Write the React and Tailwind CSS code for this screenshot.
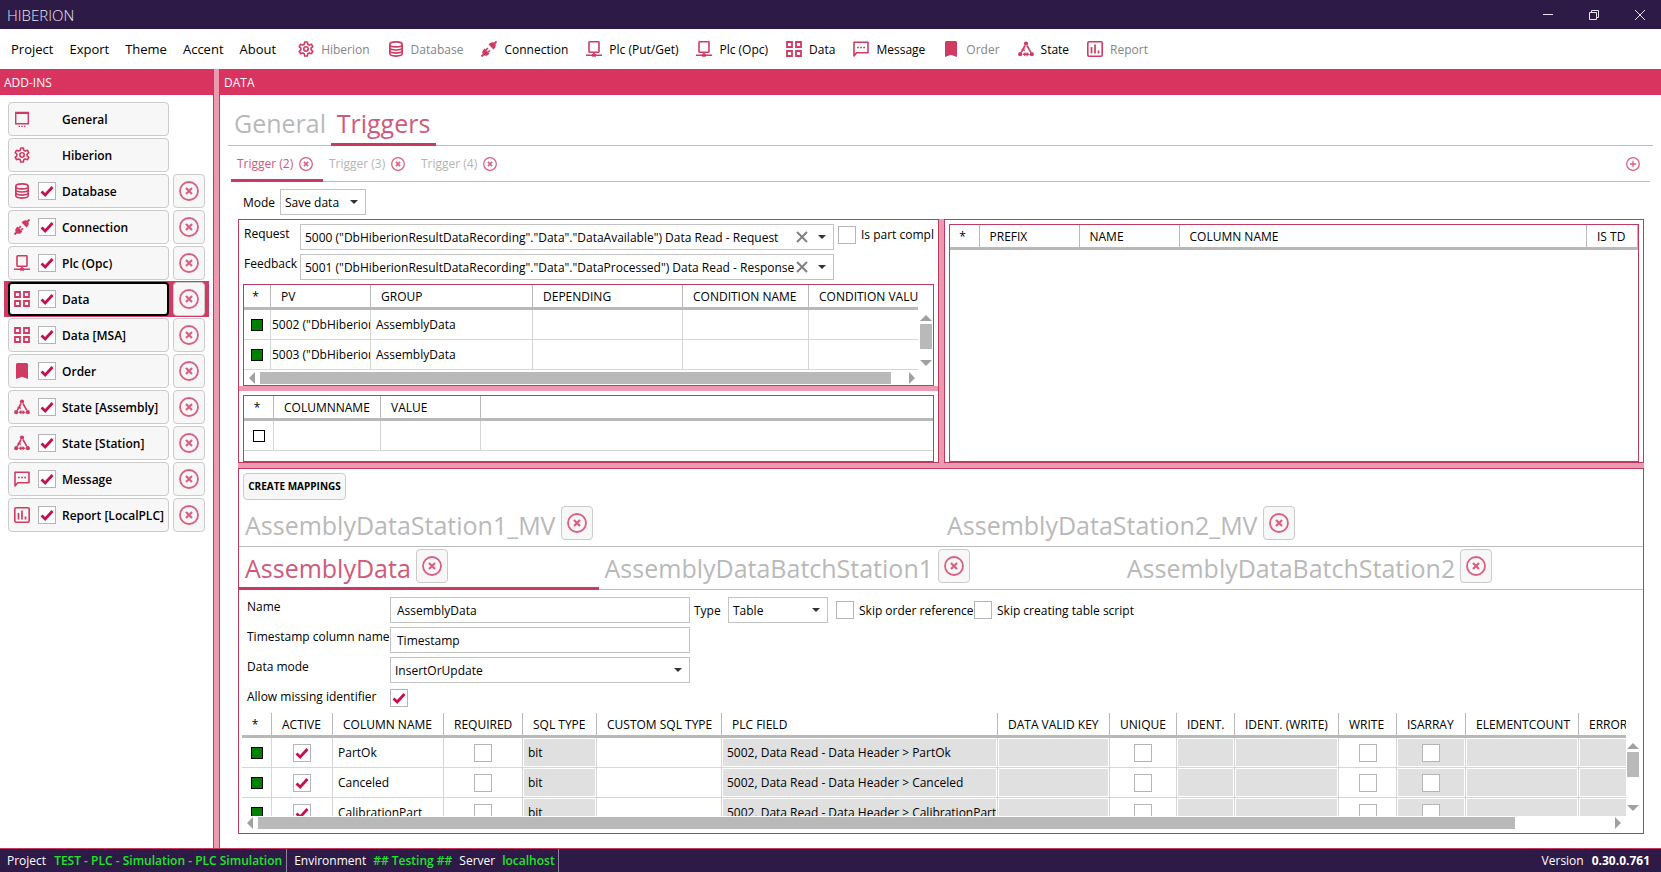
import { useState } from 'react';

/* ---------- Icons ---------- */

const Svg = ({ children, className = 'size-4' }) => (
    <svg viewBox="0 0 16 16" className={`${className} shrink-0 text-[#d13a63]`} fill="none" stroke="currentColor" strokeWidth="1.6" aria-hidden="true">
        {children}
    </svg>
);

const GeneralIcon = () => (
    <Svg>
        <path d="M1.700 1.500h12.600v11.300H1.700z" strokeWidth="1.400" />
        <path d="M1 2h14" strokeWidth="2" />
        <path d="M4.600 15.400H6M7.300 15.400h1.400M10 15.400h1.400" strokeWidth="1.200" />
    </Svg>
);

const GearIcon = () => (
    <Svg>
        <path strokeLinejoin="round" d="M6.700 1h2.600l.5 2.300 1.400.8 2.300-.8 1.300 2.300-1.700 1.600v1.600l1.700 1.600-1.300 2.300-2.300-.8-1.400.8L9.300 15H6.700l-.5-2.300-1.400-.8-2.300.8-1.300-2.300 1.700-1.600V7.200L1.200 5.600l1.300-2.300 2.300.8 1.400-.8z" />
        <circle cx="8" cy="8" r="2.200" />
    </Svg>
);

const DatabaseIcon = () => (
    <Svg>
        <ellipse cx="8" cy="3.400" rx="6.200" ry="2.500" />
        <path d="M1.800 3.400v9.200c0 1.400 2.800 2.500 6.200 2.500s6.200-1.100 6.200-2.500V3.400" />
        <path d="M1.800 6.500C1.800 7.900 4.600 9 8 9s6.200-1.100 6.200-2.500M1.800 9.600c0 1.400 2.800 2.500 6.200 2.500s6.200-1.100 6.200-2.500" />
    </Svg>
);

const PlugIcon = () => (
    <Svg>
        <path d="M.5 15.500l2.600-2.600M12.900 3.100L15.500.5" strokeWidth="2" />
        <path fill="currentColor" stroke="none" d="M3.600 7.600l4.800 4.800-1.500 1.500c-1.400 1.200-3.400 1.100-4.700-.1-1.200-1.300-1.300-3.300-.1-4.700z" />
        <path fill="currentColor" stroke="none" d="M7.600 3.600l4.800 4.800 1.500-1.500c1.200-1.400 1.100-3.400-.1-4.700-1.300-1.200-3.300-1.300-4.700-.1z" />
        <path d="M4.900 9.100l2-2M7 11.200l2-2" strokeWidth="1.500" />
    </Svg>
);

const PlcIcon = () => (
    <Svg>
        <rect x="3" y=".8" width="10" height="10.400" rx=".6" />
        <path d="M8 11v3M0 14.300h16" />
        <path d="M6 12.900h4v2.800H6z" fill="currentColor" stroke="none" />
    </Svg>
);

const DataIcon = () => (
    <Svg>
        <path strokeWidth="1.800" d="M1 1h5v5H1zM10 1h5v5h-5zM1 10h5v5H1zM10 10h5v5h-5z" />
    </Svg>
);

const MessageIcon = () => (
    <Svg>
        <path d="M1 15V1.200h14v10.600H3.600z" strokeLinejoin="round" />
        <path d="M4 6.500h1.800M7.100 6.500h1.800M10.200 6.500H12" strokeWidth="1.600" />
    </Svg>
);

const BookmarkIcon = () => (
    <Svg>
        <path fill="currentColor" stroke="none" d="M3.500 0h9A1.500 1.500 0 0 1 14 1.500V16l-6-2.300L2 16V1.500A1.500 1.500 0 0 1 3.500 0z" />
    </Svg>
);

const StateIcon = () => (
    <Svg>
        <g fill="currentColor" stroke="none">
            <circle cx="8" cy="2.500" r="2.100" />
            <circle cx="2.200" cy="13.200" r="2.100" />
            <circle cx="13.800" cy="13.200" r="2.100" />
            <path d="M4.600 13.200l2.800-2.200v4.400zM11.400 13.200L8.600 11v4.400zM3 8.500l3.600-1.200.2 3z" />
        </g>
        <path d="M7 4.500l-3.800 6.800M9 4.500l3.800 6.800M6 13.200h4" />
    </Svg>
);

const ReportIcon = () => (
    <Svg>
        <rect x=".8" y=".8" width="14.400" height="14.400" rx="1.200" />
        <path d="M4.500 6v6.500M8 3.500v9M11.500 9.500v3" strokeWidth="1.700" />
    </Svg>
);

const CircleIcon = ({ plus, className }) => (
    <svg viewBox="0 0 20 20" className={`${className} shrink-0 text-[#da5f82]`} fill="none" stroke="currentColor" strokeWidth="1.8" aria-hidden="true">
        <circle cx="10" cy="10" r="9" />
        {plus ? <path d="M10 5.500v9M5.500 10h9" /> : <path d="M7 7l6 6M13 7l-6 6" strokeWidth="2.200" />}
    </svg>
);

/* ---------- Controls ---------- */

function CheckBox({ id, checked = false, label }) {
    const [on, setOn] = useState(checked);
    return (
        <span className="inline-grid size-[18px] shrink-0 align-middle">
            <input
                id={id}
                type="checkbox"
                aria-label={label}
                checked={on}
                onChange={() => setOn(!on)}
                className="peer col-start-1 row-start-1 size-[18px] appearance-none border border-[#b5b5b5] bg-white"
            />
            <svg viewBox="0 0 18 18" className="pointer-events-none invisible col-start-1 row-start-1 size-[18px] peer-checked:visible" fill="none" stroke="#c5114b" strokeWidth="2.800">
                <path d="M3.500 9.500l3.700 3.500 7.300-8" />
            </svg>
        </span>
    );
}

function Select({ id, value, label, className, clearable }) {
    return (
        <div className={`relative h-[26px] ${className}`}>
            <select id={id} aria-label={label} className="block size-full appearance-none truncate border border-[#c3c3c3] bg-white px-1 pt-[2px] text-xs">
                <option>{value}</option>
            </select>
            {clearable && (
                <button aria-label="Clear" className="absolute top-[7px] right-[26px] size-3">
                    <svg viewBox="0 0 12 12" className="size-3" stroke="#808080" strokeWidth="2">
                        <path d="M1 1l10 10M11 1L1 11" />
                    </svg>
                </button>
            )}
            <svg viewBox="0 0 8 4" className="pointer-events-none absolute top-[11px] right-2 h-1 w-2" fill="#333">
                <path d="M0 0h8L4 4z" />
            </svg>
        </div>
    );
}

const DeleteButton = () => (
    <button aria-label="Remove" className="flex h-[34px] w-8 shrink-0 items-center justify-center rounded border border-[#cbcbcb] bg-[#f7f7f7] hover:bg-white">
        <CircleIcon className="size-5" />
    </button>
);

const Square = ({ empty }) => (
    <span className={`inline-block size-3 border border-black align-middle ${empty ? 'bg-white' : 'bg-[#008000]'}`} />
);

const Arrow = ({ dir }) => {
    const d = {
        up: 'M0 9l6-6 6 6z',
        down: 'M0 3h12L6 9z',
        left: 'M9 0v12L3 6z',
        right: 'M3 0v12l6-6z',
    }[dir];
    return (
        <svg viewBox="0 0 12 12" className="size-3 shrink-0" fill="#a0a0a0" aria-hidden="true">
            <path d={d} />
        </svg>
    );
};

const VScroll = ({ className }) => (
    <div className={`flex w-3 shrink-0 flex-col ${className}`}>
        <Arrow dir="up" />
        <div className="h-[25px] bg-[#b9b9b9]" />
        <div className="flex-1" />
        <Arrow dir="down" />
    </div>
);

const HScroll = ({ className, thumb }) => (
    <div className={`flex h-3 shrink-0 ${className}`}>
        <Arrow dir="left" />
        <div className="flex-1 px-[2px]">
            <div className={`h-3 bg-[#b9b9b9] ${thumb}`} />
        </div>
        <Arrow dir="right" />
    </div>
);

const Th = ({ children, first, last }) => (
    <th className={`h-[25px] overflow-hidden border-b-[3px] border-b-[#b9b9b9] border-r-[#b9b9b9] pt-[2px] text-xs font-medium whitespace-nowrap ${last ? '' : 'border-r'} ${first ? 'pr-[3px] text-center' : 'pl-[10px] text-left'}`}>
        {children}
    </th>
);

const Td = ({ children, center, locked, tight, last }) => (
    <td className={`h-[30px] overflow-hidden border-b border-[#d6d6d6] p-0 whitespace-nowrap ${last ? '' : 'border-r'}`}>
        <div className={`flex h-[29px] items-center overflow-hidden ${center ? 'justify-center' : tight ? 'pl-px' : locked ? 'pl-1' : 'pl-[5px]'} ${locked ? 'border border-white bg-[#e0e0e0]' : ''}`}>
            {children}
        </div>
    </td>
);

/* ---------- Data ---------- */

const menu = ['Project', 'Export', 'Theme', 'Accent', 'About'];

const toolbar = [
    { icon: GearIcon, text: 'Hiberion', off: true },
    { icon: DatabaseIcon, text: 'Database', off: true },
    { icon: PlugIcon, text: 'Connection' },
    { icon: PlcIcon, text: 'Plc (Put/Get)' },
    { icon: PlcIcon, text: 'Plc (Opc)' },
    { icon: DataIcon, text: 'Data' },
    { icon: MessageIcon, text: 'Message' },
    { icon: BookmarkIcon, text: 'Order', off: true },
    { icon: StateIcon, text: 'State' },
    { icon: ReportIcon, text: 'Report', off: true },
];

const addIns = [
    { icon: GeneralIcon, text: 'General', fixed: true },
    { icon: GearIcon, text: 'Hiberion', fixed: true },
    { icon: DatabaseIcon, text: 'Database' },
    { icon: PlugIcon, text: 'Connection' },
    { icon: PlcIcon, text: 'Plc (Opc)' },
    { icon: DataIcon, text: 'Data', selected: true },
    { icon: DataIcon, text: 'Data [MSA]' },
    { icon: BookmarkIcon, text: 'Order' },
    { icon: StateIcon, text: 'State [Assembly]' },
    { icon: StateIcon, text: 'State [Station]' },
    { icon: MessageIcon, text: 'Message' },
    { icon: ReportIcon, text: 'Report [LocalPLC]' },
];

const mappingRows = [
    ['AssemblyDataStation1_MV', 'AssemblyDataStation2_MV'],
    ['AssemblyData', 'AssemblyDataBatchStation1', 'AssemblyDataBatchStation2'],
];

const fieldColumns = [
    ['*', 'w-[30px]'],
    ['ACTIVE', 'w-[61px]'],
    ['COLUMN NAME', 'w-[111px]'],
    ['REQUIRED', 'w-[79px]'],
    ['SQL TYPE', 'w-[74px]'],
    ['CUSTOM SQL TYPE', 'w-[125px]'],
    ['PLC FIELD', 'w-[276px]'],
    ['DATA VALID KEY', 'w-[112px]'],
    ['UNIQUE', 'w-[67px]'],
    ['IDENT.', 'w-[58px]'],
    ['IDENT. (WRITE)', 'w-[104px]'],
    ['WRITE', 'w-[58px]'],
    ['ISARRAY', 'w-[69px]'],
    ['ELEMENTCOUNT', 'w-[113px]'],
    ['ERROR', 'w-[120px]'],
];

const fields = ['PartOk', 'Canceled', 'CalibrationPart'];

/* ---------- Sections ---------- */

function TitleBar() {
    return (
        <header className="flex h-[29px] shrink-0 items-center justify-between bg-[#2e1a47] pr-4 pl-[7px] text-[#e9e4f0]">
            <h1 className="text-[15px] font-light">HIBERION</h1>
            <div className="flex gap-9">
                <button aria-label="Minimize">
                    <svg viewBox="0 0 10 10" className="size-[10px]" stroke="currentColor"><path d="M0 4.500h10" /></svg>
                </button>
                <button aria-label="Restore">
                    <svg viewBox="0 0 10 10" className="size-[10px]" stroke="currentColor" fill="none"><path d="M.5 2.500h7v7h-7zM2.500 2.500v-2h7v7h-2" /></svg>
                </button>
                <button aria-label="Close">
                    <svg viewBox="0 0 10 10" className="size-[10px]" stroke="currentColor"><path d="M0 0l10 10M10 0L0 10" /></svg>
                </button>
            </div>
        </header>
    );
}

function MenuBar() {
    return (
        <nav className="flex h-10 shrink-0 items-center pl-[11px]">
            <div className="flex gap-4 pt-px text-[13px]">
                {menu.map((m) => <button key={m}>{m}</button>)}
            </div>
            <div className="ml-[22px] flex gap-[18px]">
                {toolbar.map(({ icon: Icon, text, off }) => (
                    <button key={text} disabled={off} className={`flex items-center gap-[7px] whitespace-nowrap ${off ? 'text-[#858585]' : ''}`}>
                        <Icon />
                        <span className="pt-[2px]">{text}</span>
                    </button>
                ))}
            </div>
        </nav>
    );
}

function Sidebar() {
    return (
        <aside className="flex w-[214px] shrink-0 flex-col border-r border-[#c0395f]">
            <h2 className="flex h-[26px] items-center bg-[#d8345f] pt-px pl-1 text-white">ADD-INS</h2>
            <ul className="px-1 pt-[6px]">
                {addIns.map(({ icon: Icon, text, fixed, selected }) => (
                    <li key={text} className={`flex h-9 items-center gap-1 px-1 ${selected ? 'bg-[#d13a63]' : ''}`}>
                        <div className={`flex h-[34px] w-[161px] items-center rounded bg-[#f7f7f7] ${selected ? 'border-2 border-black pl-1' : 'border border-[#cbcbcb] pl-[5px]'}`}>
                            <Icon />
                            <span className="mx-[6px] ml-2 flex w-[18px]">{!fixed && <CheckBox checked label={text} />}</span>
                            <button className="pt-[2px] font-semibold whitespace-nowrap">{text}</button>
                        </div>
                        {!fixed && <DeleteButton />}
                    </li>
                ))}
            </ul>
        </aside>
    );
}

function TriggerTabs() {
    return (
        <div className="mx-[3px] flex h-9 items-stretch border-b border-[#bcbcbc]">
            {['Trigger (2)', 'Trigger (3)', 'Trigger (4)'].map((t, i) => (
                <div key={t} className={`-mb-px flex w-[92px] items-center justify-between pr-[10px] pl-[6px] ${i === 0 ? 'border-b-[3px] border-[#c93a62] pt-[3px] text-[#cf5a7b]' : 'text-[#b5b5b5]'}`}>
                    <button className="whitespace-nowrap">{t}</button>
                    <button aria-label={`Close ${t}`}><CircleIcon className="size-[14px]" /></button>
                </div>
            ))}
            <button aria-label="Add trigger" className="mr-[10px] ml-auto"><CircleIcon plus className="size-[14px]" /></button>
        </div>
    );
}

function RequestPanel() {
    return (
        <section className="flex min-w-0 flex-col border border-[#c0395f]">
            <div className="flex flex-col gap-1 px-1 pt-1">
                <div className="flex">
                    <label htmlFor="request" className="h-5 w-[57px] shrink-0 pl-px leading-5">Request</label>
                    <Select id="request" clearable className="w-[534px] shrink" value={'5000 ("DbHiberionResultDataRecording"."Data"."DataAvailable") Data Read - Request'} />
                    <div className="ml-1 flex min-w-0 flex-1 items-start gap-[5px] overflow-hidden pt-[2px]">
                        <CheckBox id="part" />
                        <label htmlFor="part" className="leading-[18px] whitespace-nowrap">Is part compl</label>
                    </div>
                </div>
                <div className="flex">
                    <label htmlFor="feedback" className="h-5 w-[57px] shrink-0 pl-px leading-5">Feedback</label>
                    <Select id="feedback" clearable className="w-[534px] shrink" value={'5001 ("DbHiberionResultDataRecording"."Data"."DataProcessed") Data Read - Response'} />
                </div>
                <div className="border border-[#c0395f] pb-px">
                    <div className="flex pb-px">
                        <div className="h-[86px] min-w-0 flex-1 overflow-hidden">
                            <table className="w-[685px] table-fixed border-separate border-spacing-0">
                                <colgroup>
                                    <col className="w-[27px]" />
                                    <col className="w-[100px]" />
                                    <col className="w-[162px]" />
                                    <col className="w-[150px]" />
                                    <col className="w-[126px]" />
                                    <col />
                                </colgroup>
                                <thead>
                                    <tr>
                                        <Th first>*</Th>
                                        <Th>PV</Th>
                                        <Th>GROUP</Th>
                                        <Th>DEPENDING</Th>
                                        <Th>CONDITION NAME</Th>
                                        <Th last>CONDITION VALU</Th>
                                    </tr>
                                </thead>
                                <tbody>
                                    {['5002', '5003'].map((n) => (
                                        <tr key={n}>
                                            <Td center><Square /></Td>
                                            <Td tight>{`${n} ("DbHiberion`}</Td>
                                            <Td>AssemblyData</Td>
                                            <Td />
                                            <Td />
                                            <Td last />
                                        </tr>
                                    ))}
                                </tbody>
                            </table>
                        </div>
                        <VScroll className="mt-[27px] mr-px mb-[2px] ml-[2px]" />
                    </div>
                    <HScroll className="mr-[15px] ml-[2px]" thumb="w-[98%]" />
                </div>
            </div>
            <div className="h-[5px] shrink-0 bg-[#ec9ab0]" />
            <div className="mx-1 mt-1 flex-1 border border-[#c0395f]">
                <table className="w-full table-fixed border-separate border-spacing-0">
                    <colgroup>
                        <col className="w-[30px]" />
                        <col className="w-[107px]" />
                        <col className="w-[100px]" />
                        <col />
                    </colgroup>
                    <thead>
                        <tr>
                            <Th first>*</Th>
                            <Th>COLUMNNAME</Th>
                            <Th>VALUE</Th>
                            <Th last />
                        </tr>
                    </thead>
                    <tbody>
                        <tr>
                            <Td center><Square empty /></Td>
                            <Td />
                            <Td />
                            <Td last />
                        </tr>
                    </tbody>
                </table>
            </div>
        </section>
    );
}

function PrefixPanel() {
    return (
        <section className="flex min-w-0 flex-col border border-[#c0395f] px-1 pt-1">
            <div className="flex-1 border border-[#c0395f]">
                <table className="w-full table-fixed border-separate border-spacing-0">
                    <colgroup>
                        <col className="w-[30px]" />
                        <col className="w-[100px]" />
                        <col className="w-[100px]" />
                        <col />
                        <col className="w-[51px]" />
                    </colgroup>
                    <thead>
                        <tr>
                            <Th first>*</Th>
                            <Th>PREFIX</Th>
                            <Th>NAME</Th>
                            <Th>COLUMN NAME</Th>
                            <Th>IS TD</Th>
                        </tr>
                    </thead>
                </table>
            </div>
        </section>
    );
}

function MappingForm() {
    const box = 'h-[26px] w-[300px] border border-[#c3c3c3] bg-white px-[6px]';
    const label = 'h-5 w-[143px] shrink-0 leading-5 whitespace-nowrap';
    return (
        <div className="flex flex-col gap-1 pt-[7px] pl-2">
            <div className="flex">
                <label htmlFor="name" className={label}>Name</label>
                <input id="name" className={box} defaultValue="AssemblyData" />
                <div className="ml-1 flex items-center">
                    <label htmlFor="type" className="w-[34px] pt-px">Type</label>
                    <Select id="type" className="w-[100px]" value="Table" />
                    <div className="ml-2 flex items-center gap-[5px] whitespace-nowrap">
                        <CheckBox id="skip-order" />
                        <label htmlFor="skip-order" className="w-[110px] pt-px">Skip order reference</label>
                        <CheckBox id="skip-script" />
                        <label htmlFor="skip-script" className="pt-px">Skip creating table script</label>
                    </div>
                </div>
            </div>
            <div className="flex">
                <label htmlFor="timestamp" className={label}>Timestamp column name</label>
                <input id="timestamp" className={box} defaultValue="Timestamp" />
            </div>
            <div className="flex">
                <label htmlFor="data-mode" className={label}>Data mode</label>
                <Select id="data-mode" className="w-[300px]" value="InsertOrUpdate" />
            </div>
            <div className="flex h-[26px]">
                <label htmlFor="allow" className={label}>Allow missing identifier</label>
                <div className="pt-[2px]"><CheckBox id="allow" checked /></div>
            </div>
        </div>
    );
}

function FieldTable() {
    return (
        <div className="flex min-h-0 flex-1 flex-col pr-1 pb-1 pl-[3px]">
            <div className="flex min-h-0 flex-1">
                <div className="min-w-0 flex-1 overflow-hidden">
                    <table className="w-[1457px] table-fixed border-separate border-spacing-0">
                        <colgroup>
                            {fieldColumns.map(([name, width]) => <col key={name} className={width} />)}
                        </colgroup>
                        <thead>
                            <tr>
                                {fieldColumns.map(([name], i) => <Th key={name} first={i === 0}>{name}</Th>)}
                            </tr>
                        </thead>
                        <tbody>
                            {fields.map((f) => (
                                <tr key={f}>
                                    <Td center><Square /></Td>
                                    <Td center><CheckBox checked label="Active" /></Td>
                                    <Td>{f}</Td>
                                    <Td center><CheckBox label="Required" /></Td>
                                    <Td locked>bit</Td>
                                    <Td />
                                    <Td locked>{`5002, Data Read - Data Header > ${f}`}</Td>
                                    <Td locked />
                                    <Td center><CheckBox label="Unique" /></Td>
                                    <Td locked />
                                    <Td locked />
                                    <Td center><CheckBox label="Write" /></Td>
                                    <Td center locked><CheckBox label="Is array" /></Td>
                                    <Td locked />
                                    <Td locked />
                                </tr>
                            ))}
                        </tbody>
                    </table>
                </div>
                <VScroll className="mt-[27px] mb-[2px] ml-px" />
            </div>
            <HScroll className="mt-px mr-[15px] ml-[2px]" thumb="w-[93%]" />
        </div>
    );
}

function StatusBar() {
    return (
        <footer className="flex h-6 shrink-0 items-center border-t border-[#c0395f] bg-[#2e1a47] pr-[11px] pl-[7px] whitespace-nowrap text-white">
            <div className="flex h-full items-center gap-2 border-r border-[#8b8299] pr-1">
                Project <b className="font-semibold text-[#1ee52a]">TEST - PLC - Simulation - PLC Simulation</b>
            </div>
            <div className="flex h-full items-center gap-[7px] border-r border-[#8b8299] pr-[3px] pl-[7px]">
                Environment <b className="font-semibold text-[#1ee52a]">## Testing ##</b>
                Server <b className="font-semibold text-[#1ee52a]">localhost</b>
            </div>
            <div className="ml-auto flex gap-2">Version <b>0.30.0.761</b></div>
        </footer>
    );
}

export default function App() {
    return (
        <div className="flex h-screen flex-col overflow-hidden bg-white font-['Open_Sans','Noto_Sans',sans-serif] text-xs text-black">
            <TitleBar />
            <MenuBar />
            <div className="flex min-h-0 flex-1">
                <Sidebar />
                <div className="w-[5px] shrink-0 bg-[#ec9ab0]" />
                <main className="flex min-w-0 flex-1 flex-col border-l border-[#c0395f]">
                    <h2 className="flex h-[26px] shrink-0 items-center bg-[#d8345f] pt-px pl-1 text-white">DATA</h2>
                    <div className="flex min-h-0 flex-1 flex-col px-2 pb-[14px]">
                        <div className="flex h-[51px] shrink-0 border-b border-[#bcbcbc] text-[25px]">
                            <button className="w-[103px] pt-2 pl-[6px] text-left text-[#b9b9b9]">General</button>
                            <button className="-mb-px w-[105px] border-b-[3px] border-[#c93a62] pt-[10px] text-[#cf5a7b]">Triggers</button>
                        </div>
                        <TriggerTabs />
                        <div className="mr-[9px] ml-[10px] flex min-h-0 flex-1 flex-col">
                            <div className="flex items-center pt-[7px] pb-1 pl-[5px]">
                                <label htmlFor="mode" className="w-[37px] pt-px">Mode</label>
                                <Select id="mode" className="w-[86px]" value="Save data" />
                            </div>
                            <div className="grid h-[244px] shrink-0 grid-cols-[minmax(0,1fr)_5px_minmax(0,1fr)]">
                                <RequestPanel />
                                <div className="bg-[#ec9ab0]" />
                                <PrefixPanel />
                            </div>
                            <div className="h-[5px] shrink-0 bg-[#ec9ab0]" />
                            <section className="flex min-h-0 flex-1 flex-col border border-[#c0395f]">
                                <button className="mt-1 mb-1 ml-1 h-[27px] w-[103px] shrink-0 rounded border border-[#cbcbcb] bg-[#f7f7f7] text-[10px] font-bold whitespace-nowrap">
                                    CREATE MAPPINGS
                                </button>
                                {mappingRows.map((row) => (
                                    <div key={row[0]} className="flex h-[43px] shrink-0 border-b border-[#bcbcbc]">
                                        {row.map((t) => (
                                            <div key={t} className={`-mb-px flex grow items-start gap-[5px] pt-[2px] pl-[6px] ${t === 'AssemblyData' ? 'border-b-[3px] border-[#c93a62] text-[#cf5a7b]' : 'text-[#b9b9b9]'}`}>
                                                <button className="text-[25px] leading-[38px]">{t}</button>
                                                <DeleteButton />
                                            </div>
                                        ))}
                                    </div>
                                ))}
                                <MappingForm />
                                <FieldTable />
                            </section>
                        </div>
                    </div>
                </main>
            </div>
            <StatusBar />
        </div>
    );
}
